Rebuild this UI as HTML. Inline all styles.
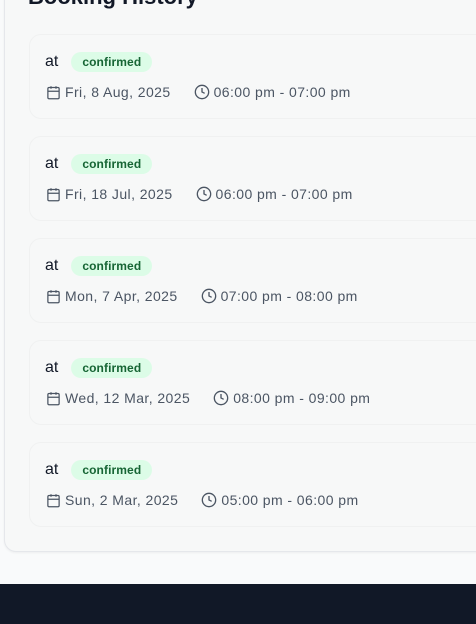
<!DOCTYPE html>
<html><head><style>
body{margin:0;width:476px;height:624px;overflow:hidden;background:#f9fafb;font-family:"Liberation Sans",Arial,sans-serif;position:relative}
.outer{position:absolute;left:4px;top:-40px;width:520px;height:590px;border:1px solid #e5e7eb;border-radius:12px;background:#f7f8f8;box-shadow:0 1px 2px rgba(0,0,0,.05)}
h2{position:absolute;left:28px;top:-16px;margin:0;font-size:22px;font-weight:bold;color:#111827}
.card{position:absolute;left:29px;width:500px;height:83px;border:1px solid #f0f1f1;border-radius:12px;background:#f7f8f8}
.r1{position:absolute;left:15px;top:17px;display:flex;align-items:center}
.at{font-size:16px;color:#111827;margin-right:13px}
.badge{background:#dcfce7;color:#166534;font-size:12px;font-weight:bold;padding:3px 11px;border-radius:11px;letter-spacing:0.1px}
.r2{position:absolute;left:16px;top:49px;display:flex;align-items:center;font-size:14px;color:#4b5563;letter-spacing:0.42px}
.r2 svg{margin-right:4px}
.gap{width:23px}
.foot{position:absolute;left:0;top:584px;width:476px;height:40px;background:#111827}
</style></head><body>
<div class="outer"></div>
<h2>Booking History</h2>
<div class="card" style="top:34px"><div class="r1"><span class="at">at</span><span class="badge">confirmed</span></div><div class="r2"><svg width="15" height="15" viewBox="0 0 24 24" fill="none" stroke="#4b5563" stroke-width="2"><rect x="3" y="4" width="18" height="18" rx="2"/><path d="M16 2v4M8 2v4M3 10h18"/></svg>Fri, 8 Aug, 2025<span class="gap"></span><svg width="16" height="16" viewBox="0 0 24 24" fill="none" stroke="#4b5563" stroke-width="2"><circle cx="12" cy="12" r="10"/><path d="M12 6v6l4 2"/></svg>06:00 pm - 07:00 pm</div></div>
<div class="card" style="top:136px"><div class="r1"><span class="at">at</span><span class="badge">confirmed</span></div><div class="r2"><svg width="15" height="15" viewBox="0 0 24 24" fill="none" stroke="#4b5563" stroke-width="2"><rect x="3" y="4" width="18" height="18" rx="2"/><path d="M16 2v4M8 2v4M3 10h18"/></svg>Fri, 18 Jul, 2025<span class="gap"></span><svg width="16" height="16" viewBox="0 0 24 24" fill="none" stroke="#4b5563" stroke-width="2"><circle cx="12" cy="12" r="10"/><path d="M12 6v6l4 2"/></svg>06:00 pm - 07:00 pm</div></div>
<div class="card" style="top:238px"><div class="r1"><span class="at">at</span><span class="badge">confirmed</span></div><div class="r2"><svg width="15" height="15" viewBox="0 0 24 24" fill="none" stroke="#4b5563" stroke-width="2"><rect x="3" y="4" width="18" height="18" rx="2"/><path d="M16 2v4M8 2v4M3 10h18"/></svg>Mon, 7 Apr, 2025<span class="gap"></span><svg width="16" height="16" viewBox="0 0 24 24" fill="none" stroke="#4b5563" stroke-width="2"><circle cx="12" cy="12" r="10"/><path d="M12 6v6l4 2"/></svg>07:00 pm - 08:00 pm</div></div>
<div class="card" style="top:340px"><div class="r1"><span class="at">at</span><span class="badge">confirmed</span></div><div class="r2"><svg width="15" height="15" viewBox="0 0 24 24" fill="none" stroke="#4b5563" stroke-width="2"><rect x="3" y="4" width="18" height="18" rx="2"/><path d="M16 2v4M8 2v4M3 10h18"/></svg>Wed, 12 Mar, 2025<span class="gap"></span><svg width="16" height="16" viewBox="0 0 24 24" fill="none" stroke="#4b5563" stroke-width="2"><circle cx="12" cy="12" r="10"/><path d="M12 6v6l4 2"/></svg>08:00 pm - 09:00 pm</div></div>
<div class="card" style="top:442px"><div class="r1"><span class="at">at</span><span class="badge">confirmed</span></div><div class="r2"><svg width="15" height="15" viewBox="0 0 24 24" fill="none" stroke="#4b5563" stroke-width="2"><rect x="3" y="4" width="18" height="18" rx="2"/><path d="M16 2v4M8 2v4M3 10h18"/></svg>Sun, 2 Mar, 2025<span class="gap"></span><svg width="16" height="16" viewBox="0 0 24 24" fill="none" stroke="#4b5563" stroke-width="2"><circle cx="12" cy="12" r="10"/><path d="M12 6v6l4 2"/></svg>05:00 pm - 06:00 pm</div></div>
<div class="foot"></div>
</body></html>
